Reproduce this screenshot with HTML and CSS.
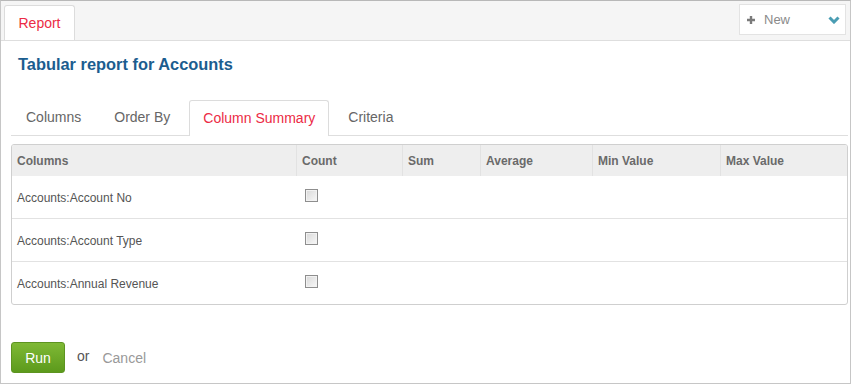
FILE: index.html
```html
<!DOCTYPE html>
<html lang="en">
<head>
    <meta charset="UTF-8" />
    <title>Tabular report for Accounts</title>
    <link rel="stylesheet" href="styles.css">
</head>
<body>
<div class="frame">
    <div class="topbar">
        <div class="top-tab">Report</div>
        <button class="new-btn" type="button">
            <svg class="plus" width="8" height="8" viewBox="0 0 8 8"><path d="M4 0v8M0 4h8" stroke="#7a7a7a" stroke-width="2.4"/></svg>
            <span>New</span>
            <svg class="chev" width="12" height="8" viewBox="0 0 12 8"><polyline points="1.5,1.5 6,6 10.5,1.5" fill="none" stroke="#4a9db3" stroke-width="3"/></svg>
        </button>
    </div>

    <div class="content">
        <h2 class="title">Tabular report for Accounts</h2>

        <ul class="tabs">
            <li>Columns</li>
            <li>Order By</li>
            <li class="active">Column Summary</li>
            <li>Criteria</li>
        </ul>

        <div class="table-wrap">
            <table class="summary">
                <thead>
                <tr>
                    <th class="c-name">Columns</th>
                    <th class="c-count">Count</th>
                    <th class="c-sum">Sum</th>
                    <th class="c-avg">Average</th>
                    <th class="c-min">Min Value</th>
                    <th class="c-max">Max Value</th>
                </tr>
                </thead>
                <tbody>
                <tr>
                    <td>Accounts:Account No</td>
                    <td><input type="checkbox" /></td>
                    <td></td><td></td><td></td><td></td>
                </tr>
                <tr>
                    <td>Accounts:Account Type</td>
                    <td><input type="checkbox" /></td>
                    <td></td><td></td><td></td><td></td>
                </tr>
                <tr>
                    <td>Accounts:Annual Revenue</td>
                    <td><input type="checkbox" /></td>
                    <td></td><td></td><td></td><td></td>
                </tr>
                </tbody>
            </table>
        </div>

        <div class="actions">
            <button class="run-btn" type="button">Run</button>
            <span class="or">or</span>
            <a class="cancel" href="#">Cancel</a>
        </div>
    </div>
</div>
</body>
</html>
```
FILE: styles.css
```css
body {
    margin: 0;
    font-family: "Liberation Sans", Arial, sans-serif;
    background: #fff;
}
.frame {
    width: 851px;
    height: 384px;
    box-sizing: border-box;
    border: 1px solid #c6c6c6;
    border-top-color: #b8b8b8;
    box-shadow: inset 0 1px 0 #dcdcdc;
    overflow: hidden;
}
.topbar {
    height: 39px;
    background: #f5f5f5;
    border-bottom: 1px solid #dedede;
    display: flex;
    align-items: flex-start;
    justify-content: space-between;
    padding: 0 4px 0 3px;
}
.top-tab {
    margin-top: 4px;
    width: 71px;
    height: 35px;
    box-sizing: border-box;
    background: #fff;
    border: 1px solid #dcdcdc;
    border-bottom: none;
    border-radius: 3px 3px 0 0;
    color: #ec2b45;
    font-size: 14px;
    text-align: center;
    line-height: 34px;
}
.new-btn {
    margin-top: 3px;
    width: 107px;
    height: 31px;
    background: #fff;
    border: 1px solid #e3e3e3;
    display: flex;
    align-items: center;
    padding: 0 5px 0 7px;
    font-family: inherit;
    font-size: 13px;
    color: #8a8a8a;
}
.new-btn .plus {
    margin-right: 9px;
}
.new-btn .chev {
    margin-left: auto;
}
.content {
    padding: 0 2px 0 10px;
}
.title {
    margin: 0;
    padding: 14px 0 0 7px;
    height: 46px;
    box-sizing: border-box;
    font-size: 16.4px;
    color: #1b5d8f;
}
.tabs {
    list-style: none;
    margin: 13px 0 0;
    padding: 0 0 0 1px;
    display: flex;
    gap: 5px;
    border-bottom: 1px solid #dedede;
    height: 35px;
}
.tabs li {
    padding: 0 14px;
    height: 35px;
    line-height: 35px;
    font-size: 14px;
    color: #666;
    box-sizing: border-box;
}
.tabs li.active {
    height: 36px;
    background: #fff;
    color: #ec2b45;
    border: 1px solid #dcdcdc;
    border-bottom: none;
    border-radius: 3px 3px 0 0;
    padding: 0 13px;
    line-height: 34px;
}
.table-wrap {
    margin-top: 8px;
    border: 1px solid #cfcfcf;
    border-radius: 3px;
    overflow: hidden;
}
.summary {
    width: 100%;
    border-collapse: collapse;
    table-layout: fixed;
}
.summary th {
    background: #eeeeee;
    height: 31px;
    padding: 0 0 0 5px;
    text-align: left;
    font-size: 12px;
    color: #6a6a6a;
    border-left: 1px solid #e2e2e2;
}
.summary th:first-child {
    border-left: none;
}
.c-name { width: 279px; }
.c-count { width: 100px; }
.c-sum { width: 72px; }
.c-avg { width: 106px; }
.c-min { width: 122px; }
.summary tbody tr {
    height: 43px;
}
.summary tbody tr:first-child {
    height: 42px;
}
.summary td {
    padding: 2px 0 0 5px;
    font-size: 12px;
    color: #555;
    border-top: 1px solid #e2e2e2;
}
.summary tbody tr:first-child td {
    border-top: none;
}
.summary td input {
    appearance: none;
    -webkit-appearance: none;
    width: 13px;
    height: 13px;
    margin: 0 0 4px 3px;
    border: 1px solid #8e8e8e;
    background: linear-gradient(135deg, #d8d8d8, #f8f8f8);
    box-shadow: inset 0 0 0 1px #f2f2f2;
    vertical-align: middle;
}
.actions {
    margin-top: 37px;
    display: flex;
    align-items: center;
}
.run-btn {
    width: 54px;
    height: 31px;
    border: 1px solid #5d9420;
    border-radius: 3px;
    background: linear-gradient(#7fb935, #5c9a1c);
    color: #fff;
    font-family: inherit;
    font-size: 14px;
    padding: 0;
}
.or {
    margin: 0 0 4px 12px;
    font-size: 14px;
    color: #555;
}
.cancel {
    margin: 0 0 0 13px;
    font-size: 14px;
    color: #999;
    text-decoration: none;
}
```
